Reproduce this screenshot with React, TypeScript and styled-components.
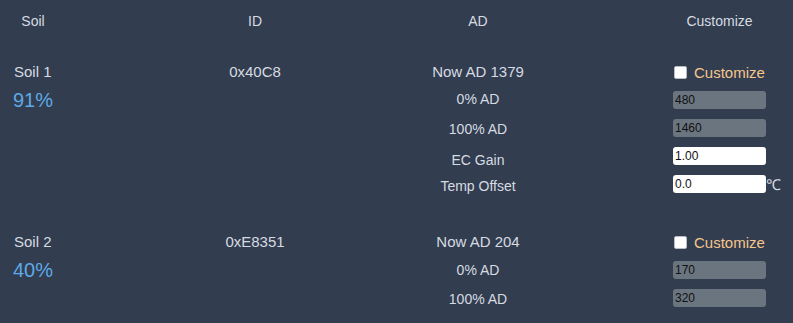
import React from "react";
import styled, {createGlobalStyle} from "styled-components";

const GlobalStyle = createGlobalStyle`
  html, body {
    margin: 0;
    background: #323d4f;
  }
  body {
    font-family: "Liberation Sans", Arial, sans-serif;
    color: #d6dbe2;
  }
`

interface Field {
  label: string
  value: string
  locked?: boolean
  unit?: string
  top: number
}

interface Soil {
  name: string
  percent: string
  id: string
  nowAd: number
  fields: Field[]
}

const soils: Soil[] = [
  {
    name: "Soil 1",
    percent: "91%",
    id: "0x40C8",
    nowAd: 1379,
    fields: [
      {label: "0% AD", value: "480", locked: true, top: 5},
      {label: "100% AD", value: "1460", locked: true, top: 7},
      {label: "EC Gain", value: "1.00", top: 10},
      {label: "Temp Offset", value: "0.0", unit: "℃", top: 8},
    ],
  },
  {
    name: "Soil 2",
    percent: "40%",
    id: "0xE8351",
    nowAd: 204,
    fields: [
      {label: "0% AD", value: "170", locked: true, top: 6},
      {label: "100% AD", value: "320", locked: true, top: 7},
    ],
  },
]

export default function App() {
  return <Page>
    <GlobalStyle/>
    <HeaderRow>
      <HeadCell $width={66}>Soil</HeadCell>
      <HeadCell>ID</HeadCell>
      <HeadCell>AD</HeadCell>
      <HeadCell $pad={97} $width={93}>Customize</HeadCell>
    </HeaderRow>
    <SoilList>
      {soils.map(soil => <SoilBlock key={soil.id}>
        <Row>
          <NameCell>{soil.name}</NameCell>
          <CenterCell $size={15}>{soil.id}</CenterCell>
          <CenterCell $size={15}>Now AD {soil.nowAd}</CenterCell>
          <ControlCell>
            <CheckBox type="checkbox"/>
            <CustomizeLabel>Customize</CustomizeLabel>
          </ControlCell>
        </Row>
        {soil.fields.map((field, i) => <Row key={field.label}>
          <NameCell>{i === 0 && <Percent>{soil.percent}</Percent>}</NameCell>
          <div/>
          <FieldLabel $top={field.top}>{field.label}</FieldLabel>
          <ControlCell>
            <ValueInput defaultValue={field.value} readOnly={field.locked} $locked={field.locked}/>
            {field.unit && <Unit>{field.unit}</Unit>}
          </ControlCell>
        </Row>)}
      </SoilBlock>)}
    </SoilList>
  </Page>
}

const Page = styled.div`
  width: 793px;
  min-height: 323px;
`

const HeaderRow = styled.div`
  display: grid;
  grid-template-columns: 130px 250px 196px 1fr;
  align-items: center;
  height: 42px;
  margin-bottom: 16px;
`

const HeadCell = styled.div<{$width?: number, $pad?: number}>`
  font-size: 14px;
  line-height: 16px;
  text-align: center;
  padding-left: ${p => p.$pad ?? 0}px;
  width: ${p => p.$width ? `${p.$width}px` : "auto"};
`

const SoilList = styled.div`
  display: flex;
  flex-direction: column;
  gap: 30px;
`

const SoilBlock = styled.div`
  display: flex;
  flex-direction: column;
`

const Row = styled.div`
  display: grid;
  grid-template-columns: 130px 250px 196px 1fr;
  align-items: center;
  height: 28px;
`

const NameCell = styled.div`
  padding-left: 14px;
  font-size: 15px;
  line-height: 18px;
`

const Percent = styled.span`
  font-size: 20px;
  line-height: 24px;
  color: #5ea9e6;
  margin-left: -1px;
`

const CenterCell = styled.div<{$size: number}>`
  text-align: center;
  font-size: ${p => p.$size}px;
  line-height: 18px;
`

const FieldLabel = styled.div<{$top: number}>`
  align-self: start;
  padding-top: ${p => p.$top}px;
  text-align: center;
  font-size: 14px;
  line-height: 16px;
`

const ControlCell = styled.div`
  display: flex;
  align-items: center;
  padding-left: 97px;
`

const CheckBox = styled.input`
  appearance: none;
  width: 13px;
  height: 13px;
  margin: 0 0 0 1px;
  background: #fff;
  border: 1px solid #b9bec6;
  border-radius: 2px;
`

const CustomizeLabel = styled.span`
  margin-left: 7px;
  font-size: 15px;
  color: #f6c68c;
`

const ValueInput = styled.input<{$locked?: boolean}>`
  box-sizing: border-box;
  width: 93px;
  height: 18px;
  padding: 0 2px;
  border: none;
  border-radius: 3px;
  outline: none;
  font-family: "Liberation Sans", Arial, sans-serif;
  font-size: 12px;
  color: #111;
  background: ${p => p.$locked ? "#6b7580" : "#fff"};
`

const Unit = styled.span`
  font-size: 15px;
  color: #d6dbe2;
`
